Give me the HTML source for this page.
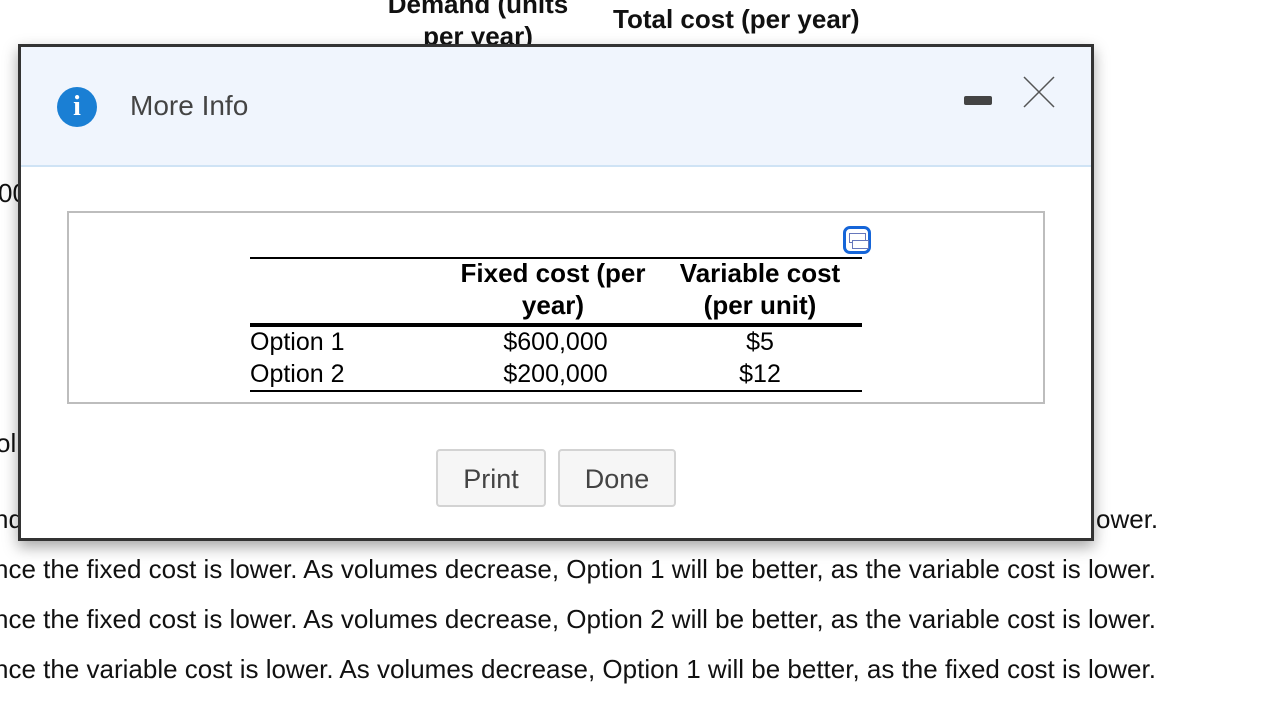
<!DOCTYPE html>
<html><head><meta charset="utf-8"><style>
body{margin:0;width:1288px;height:722px;overflow:hidden;background:#fff;font-family:"Liberation Sans",Arial,sans-serif;position:relative}
.a{position:absolute;white-space:nowrap}
.bg{font-size:26px;color:#111}
.modal{position:absolute;left:18px;top:44px;width:1070px;height:491px;border:3px solid #333;background:#fff;box-shadow:0 6px 14px rgba(0,0,0,.35)}
.hdr{position:absolute;left:0;top:0;width:1070px;height:118px;background:#f0f5fd;border-bottom:2px solid #cfe3f5}
.t{font-size:25px;color:#000;line-height:32px}
.tb{font-size:26px;font-weight:bold;color:#000;line-height:32px}
.btn{position:absolute;top:402px;height:58px;border:2px solid #d3d3d3;border-radius:4px;background:#f6f6f6;font-size:27px;color:#444;text-align:center;line-height:56px;box-sizing:border-box}
</style></head><body>
<div class="a bg" style="left:378px;top:-12px;font-weight:bold;text-align:center;width:200px;line-height:32px">Demand (units<br>per year)</div>
<div class="a bg" style="left:613px;top:4px;font-weight:bold">Total cost (per year)</div>
<div class="a bg" style="left:-2px;top:178px">00</div>
<div class="a bg" style="left:-4px;top:428px">ol</div>
<div class="a bg" style="left:-6px;top:504px">nd</div>
<div class="a bg" style="left:1096px;top:504px">ower.</div>
<div class="a bg" style="left:-6px;top:554px">nce the fixed cost is lower. As volumes decrease, Option 1 will be better, as the variable cost is lower.</div>
<div class="a bg" style="left:-6px;top:604px">nce the fixed cost is lower. As volumes decrease, Option 2 will be better, as the variable cost is lower.</div>
<div class="a bg" style="left:-6px;top:654px">nce the variable cost is lower. As volumes decrease, Option 1 will be better, as the fixed cost is lower.</div>
<div class="modal">
 <div class="hdr">
  <div class="a" style="left:36px;top:40px;width:40px;height:40px;border-radius:50%;background:#1a7fd4;color:#fff;font-weight:bold;font-size:28px;text-align:center;line-height:40px;font-family:'Liberation Serif',serif">i</div>
  <div class="a" style="left:109px;top:43px;font-size:28px;color:#444">More Info</div>
  <div class="a" style="left:943px;top:49px;width:28px;height:9px;background:#444;border-radius:2px"></div>
  <svg class="a" style="left:1002px;top:29px" width="32" height="32"><path d="M1 1L31 31M31 1L1 31" stroke="#555" stroke-width="1.5"/></svg>
 </div>
 <div class="a" style="left:46px;top:164px;width:974px;height:189px;border:2px solid #bdbdbd"></div>
 <div class="a" style="left:822px;top:179px;width:28px;height:28px;border:3px solid #1565d8;border-radius:7px;box-sizing:border-box;background:#fff"><div style="position:absolute;left:3px;top:4px;width:15px;height:8px;border:1.5px solid #6677bb"></div><div style="position:absolute;left:6px;top:11px;width:15px;height:7px;border:1.5px solid #6677bb;background:#fff"></div></div>
 <div class="a" style="left:229px;top:210px;width:612px;height:2px;background:#000"></div>
 <div class="a tb" style="left:432px;top:210px;width:200px;text-align:center">Fixed cost (per<br>year)</div>
 <div class="a tb" style="left:639px;top:210px;width:200px;text-align:center">Variable cost<br>(per unit)</div>
 <div class="a" style="left:229px;top:276px;width:612px;height:4px;background:#000"></div>
 <div class="a t" style="left:229px;top:279px">Option 1<br>Option 2</div>
 <div class="a t" style="left:432px;top:279px;width:205px;text-align:center">$600,000<br>$200,000</div>
 <div class="a t" style="left:639px;top:279px;width:200px;text-align:center">$5<br>$12</div>
 <div class="a" style="left:229px;top:343px;width:612px;height:2px;background:#000"></div>
 <div class="btn" style="left:415px;width:110px">Print</div>
 <div class="btn" style="left:537px;width:118px">Done</div>
</div>
</body></html>
